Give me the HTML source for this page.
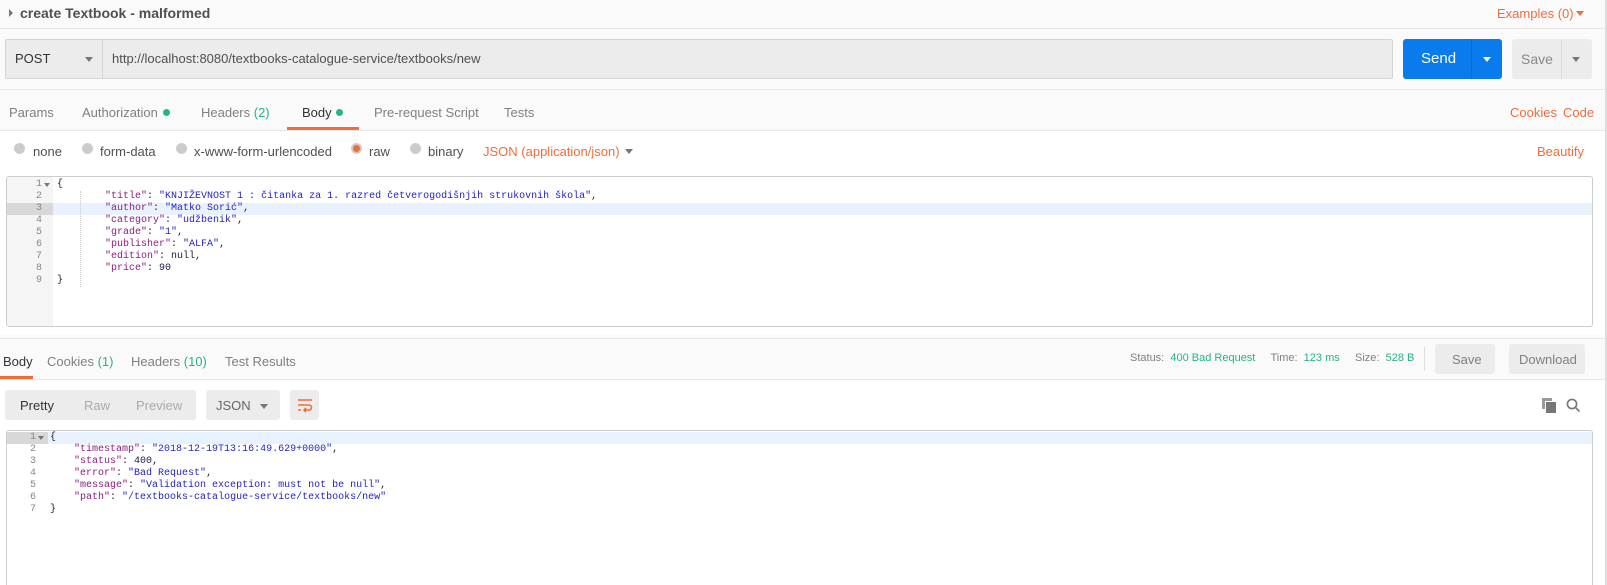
<!DOCTYPE html>
<html><head><meta charset="utf-8"><style>
*{margin:0;padding:0;box-sizing:border-box}
html,body{width:1607px;height:585px;overflow:hidden}
#w{width:1607px;height:585px;overflow:hidden;background:#fafafa;font-family:"Liberation Sans",sans-serif;position:relative;color:#808080;font-size:13px}
.a{position:absolute;white-space:nowrap}
.or{color:#f26b3a}
.gr{color:#26b47f}
.mono{font-family:"Liberation Mono",monospace;font-size:10px;line-height:12px}
.k{color:#8e1d7f}.s{color:#2323c8}.n{color:#1a1a4a}.p{color:#222}
.gut{position:absolute;left:0;top:0;bottom:0;background:#f5f5f5;color:#888;text-align:right}
.btn{position:absolute;background:#ececec;border-radius:3px}
</style></head><body><div id="w">
<div class="a" style="left:0;top:0;width:1605px;height:29px;border-bottom:1px solid #e6e6e6"></div>
<div class="a" style="left:9px;top:9px;width:0;height:0;border-top:4px solid transparent;border-bottom:4px solid transparent;border-left:4px solid #777"></div>
<div class="a" style="left:20px;top:5px;font-size:14px;font-weight:bold;color:#505050">create Textbook - malformed</div>
<div class="a or" style="left:1497px;top:6px;font-size:13px">Examples (0)</div>
<div class="a" style="left:1576px;top:11px;border-left:4px solid transparent;border-right:4px solid transparent;border-top:5px solid #f26b3a"></div>
<div class="a" style="left:5px;top:39px;width:1388px;height:40px;background:#ececec;border:1px solid #d4d4d4;border-radius:2px"></div>
<div class="a" style="left:102px;top:40px;width:1px;height:38px;background:#d4d4d4"></div>
<div class="a" style="left:15px;top:51px;font-size:13px;color:#333">POST</div>
<div class="a" style="left:85px;top:57px;border-left:4px solid transparent;border-right:4px solid transparent;border-top:5px solid #777"></div>
<div class="a" style="left:112px;top:51px;font-size:13px;color:#505050">http://localhost:8080/textbooks-catalogue-service/textbooks/new</div>
<div class="a" style="left:1403px;top:39px;width:99px;height:40px;background:#097bed;border-radius:3px"></div>
<div class="a" style="left:1471px;top:39px;width:1px;height:40px;background:#0a6ad0"></div>
<div class="a" style="left:1421px;top:50px;font-size:15px;color:#fff">Send</div>
<div class="a" style="left:1483px;top:57px;border-left:4px solid transparent;border-right:4px solid transparent;border-top:5px solid #fff"></div>
<div class="btn" style="left:1512px;top:39px;width:80px;height:40px"></div>
<div class="a" style="left:1561px;top:39px;width:1px;height:40px;background:#dcdcdc"></div>
<div class="a" style="left:1521px;top:51px;font-size:14px;color:#888">Save</div>
<div class="a" style="left:1572px;top:57px;border-left:4px solid transparent;border-right:4px solid transparent;border-top:5px solid #777"></div>
<div class="a" style="left:0;top:89px;width:1605px;height:1px;background:#e6e6e6"></div>
<div class="a" style="left:0;top:130px;width:1605px;height:1px;background:#e6e6e6"></div>
<div class="a" style="left:9px;top:105px">Params</div>
<div class="a" style="left:82px;top:105px">Authorization</div>
<div class="a" style="left:163px;top:109px;width:7px;height:7px;border-radius:50%;background:#26b47f"></div>
<div class="a" style="left:201px;top:105px">Headers <span class="gr">(2)</span></div>
<div class="a" style="left:302px;top:105px;color:#333">Body</div>
<div class="a" style="left:336px;top:109px;width:7px;height:7px;border-radius:50%;background:#26b47f"></div>
<div class="a" style="left:287px;top:127px;width:72px;height:3px;background:#f26b3a"></div>
<div class="a" style="left:374px;top:105px">Pre-request Script</div>
<div class="a" style="left:504px;top:105px">Tests</div>
<div class="a or" style="left:1510px;top:105px">Cookies</div>
<div class="a or" style="left:1563px;top:105px">Code</div>
<div class="a" style="left:0;top:131px;width:1605px;height:40px;background:#fff"></div>
<div class="a" style="left:14px;top:143px;width:11px;height:11px;border-radius:50%;background:#ccc"></div>
<div class="a" style="left:33px;top:144px;color:#505050">none</div>
<div class="a" style="left:82px;top:143px;width:11px;height:11px;border-radius:50%;background:#ccc"></div>
<div class="a" style="left:100px;top:144px;color:#505050">form-data</div>
<div class="a" style="left:176px;top:143px;width:11px;height:11px;border-radius:50%;background:#ccc"></div>
<div class="a" style="left:194px;top:144px;color:#505050">x-www-form-urlencoded</div>
<div class="a" style="left:351px;top:143px;width:11px;height:11px;border-radius:50%;background:#ccc"></div>
<div class="a" style="left:353px;top:145px;width:7px;height:7px;border-radius:50%;background:#f26b3a"></div>
<div class="a" style="left:369px;top:144px;color:#505050">raw</div>
<div class="a" style="left:410px;top:143px;width:11px;height:11px;border-radius:50%;background:#ccc"></div>
<div class="a" style="left:428px;top:144px;color:#505050">binary</div>
<div class="a or" style="left:483px;top:144px">JSON (application/json)</div>
<div class="a" style="left:625px;top:149px;border-left:4px solid transparent;border-right:4px solid transparent;border-top:5px solid #777"></div>
<div class="a or" style="left:1537px;top:144px">Beautify</div>
<div class="a" style="left:0;top:171px;width:1605px;height:164px;background:#fff"></div>
<div class="a mono" style="left:6px;top:176px;width:1587px;height:151px;border:1px solid #ccc;border-radius:3px;background:#fff;overflow:hidden">
 <div class="gut" style="width:46px;padding-right:11px;padding-top:2px">1<br>2<br><span style="display:block;margin-right:-11px;padding-right:11px;background:#d8d8d8">3</span>4<br>5<br>6<br>7<br>8<br>9</div>
 <div class="a" style="left:37px;top:6px;border-left:3px solid transparent;border-right:3px solid transparent;border-top:4px solid #777"></div>
 <div class="a" style="left:46px;top:26px;width:1540px;height:12px;background:#e8f2fe"></div>
 <div class="a" style="left:73px;top:14px;height:96px;border-left:1px dotted #ccc"></div>
 <div class="a p" style="left:50px;top:2px;line-height:12px">{<br>
 &nbsp;&nbsp;&nbsp;&nbsp;&nbsp;&nbsp;&nbsp;&nbsp;<span class="k">"title"</span>: <span class="s">"KNJIŽEVNOST 1 : čitanka za 1. razred četverogodišnjih strukovnih škola"</span>,<br>
 &nbsp;&nbsp;&nbsp;&nbsp;&nbsp;&nbsp;&nbsp;&nbsp;<span class="k">"author"</span>: <span class="s">"Matko Sorić"</span>,<br>
 &nbsp;&nbsp;&nbsp;&nbsp;&nbsp;&nbsp;&nbsp;&nbsp;<span class="k">"category"</span>: <span class="s">"udžbenik"</span>,<br>
 &nbsp;&nbsp;&nbsp;&nbsp;&nbsp;&nbsp;&nbsp;&nbsp;<span class="k">"grade"</span>: <span class="s">"1"</span>,<br>
 &nbsp;&nbsp;&nbsp;&nbsp;&nbsp;&nbsp;&nbsp;&nbsp;<span class="k">"publisher"</span>: <span class="s">"ALFA"</span>,<br>
 &nbsp;&nbsp;&nbsp;&nbsp;&nbsp;&nbsp;&nbsp;&nbsp;<span class="k">"edition"</span>: null,<br>
 &nbsp;&nbsp;&nbsp;&nbsp;&nbsp;&nbsp;&nbsp;&nbsp;<span class="k">"price"</span>: <span class="n">90</span><br>
 }</div>
</div>
<div class="a" style="left:0;top:338px;width:1605px;height:1px;background:#e6e6e6"></div>
<div class="a" style="left:0;top:379px;width:1605px;height:1px;background:#e6e6e6"></div>
<div class="a" style="left:3px;top:354px;color:#333">Body</div>
<div class="a" style="left:0;top:376px;width:33px;height:3px;background:#f26b3a"></div>
<div class="a" style="left:47px;top:354px">Cookies <span class="gr">(1)</span></div>
<div class="a" style="left:131px;top:354px">Headers <span class="gr">(10)</span></div>
<div class="a" style="left:225px;top:354px">Test Results</div>
<div class="a" style="left:1130px;top:352px;font-size:11px">Status: <span class="gr">&nbsp;400 Bad Request</span>&nbsp;&nbsp;&nbsp;&nbsp; Time: <span class="gr">&nbsp;123 ms</span>&nbsp;&nbsp;&nbsp;&nbsp; Size: <span class="gr">&nbsp;528 B</span></div>
<div class="a" style="left:1424px;top:347px;width:1px;height:24px;background:#ddd"></div>
<div class="btn" style="left:1435px;top:344px;width:60px;height:30px"></div>
<div class="a" style="left:1452px;top:352px">Save</div>
<div class="btn" style="left:1509px;top:344px;width:76px;height:30px"></div>
<div class="a" style="left:1519px;top:352px">Download</div>
<div class="a" style="left:0;top:380px;width:1605px;height:205px;background:#fff"></div>
<div class="btn" style="left:5px;top:390px;width:191px;height:30px"></div>
<div class="a" style="left:20px;top:398px;color:#333">Pretty</div>
<div class="a" style="left:84px;top:398px;color:#aaa">Raw</div>
<div class="a" style="left:136px;top:398px;color:#aaa">Preview</div>
<div class="btn" style="left:206px;top:390px;width:74px;height:30px"></div>
<div class="a" style="left:216px;top:398px;color:#666">JSON</div>
<div class="a" style="left:260px;top:404px;border-left:4px solid transparent;border-right:4px solid transparent;border-top:5px solid #777"></div>
<div class="btn" style="left:290px;top:390px;width:29px;height:30px"></div>
<svg class="a" style="left:297px;top:397px" width="16" height="16" viewBox="0 0 16 16" fill="none" stroke="#f26b3a" stroke-width="1.6"><path d="M1 3h14M1 8h11a2.5 2.5 0 0 1 0 5H7M9 11l-2 2 2 2M1 13h3"/></svg>
<div class="a" style="left:1542px;top:398px;width:10px;height:11px;background:#999"></div>
<div class="a" style="left:1545px;top:401px;width:11px;height:12px;background:#777;border-left:1px solid #fff;border-top:1px solid #fff"></div>
<svg class="a" style="left:1566px;top:398px" width="15" height="15" viewBox="0 0 15 15" fill="none" stroke="#777" stroke-width="1.6"><circle cx="6" cy="6" r="4.6"/><path d="M9.5 9.5l4 4"/></svg>
<div class="a mono" style="left:6px;top:430px;width:1587px;height:155px;border:1px solid #ccc;border-bottom:none;border-radius:3px 3px 0 0;background:#fff;overflow:hidden">
 <div class="gut" style="width:41px;padding-right:12px;padding-top:1px;background:#fff"><span style="display:block;margin-right:-12px;padding-right:12px;background:#d8d8d8">1</span>2<br>3<br>4<br>5<br>6<br>7</div>
 <div class="a" style="left:31px;top:5px;border-left:3px solid transparent;border-right:3px solid transparent;border-top:4px solid #777"></div>
 <div class="a" style="left:41px;top:1px;width:1545px;height:12px;background:#e8f2fe"></div>
 <div class="a p" style="left:43px;top:1px;line-height:12px">{<br>
 &nbsp;&nbsp;&nbsp;&nbsp;<span class="k">"timestamp"</span>: <span class="s">"2018-12-19T13:16:49.629+0000"</span>,<br>
 &nbsp;&nbsp;&nbsp;&nbsp;<span class="k">"status"</span>: <span class="n">400</span>,<br>
 &nbsp;&nbsp;&nbsp;&nbsp;<span class="k">"error"</span>: <span class="s">"Bad Request"</span>,<br>
 &nbsp;&nbsp;&nbsp;&nbsp;<span class="k">"message"</span>: <span class="s">"Validation exception: must not be null"</span>,<br>
 &nbsp;&nbsp;&nbsp;&nbsp;<span class="k">"path"</span>: <span class="s">"/textbooks-catalogue-service/textbooks/new"</span><br>
 }</div>
</div>
<div class="a" style="left:1605px;top:0;width:2px;height:585px;background:#ddd"></div>
</div></body></html>
